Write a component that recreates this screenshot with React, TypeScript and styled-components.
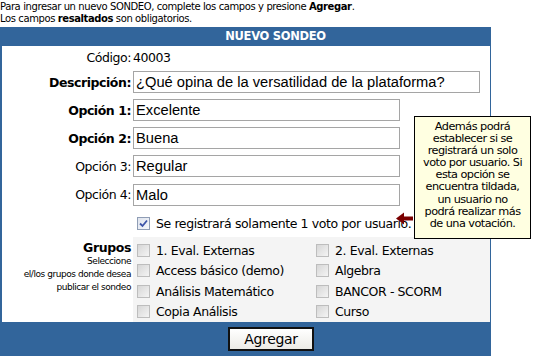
import styled, { createGlobalStyle } from 'styled-components';

const GlobalStyle = createGlobalStyle`
  body {
    margin: 0;
    background: #ffffff;
    font-family: Tahoma, "DejaVu Sans", "Liberation Sans", sans-serif;
    color: #000;
  }
`;

const BLUE = '#32659b';
const FONT = `"Liberation Sans", Arial, sans-serif`;
const UI_FONT = `"DejaVu Sans", Tahoma, sans-serif`;

const Page = styled.div`
  position: relative;
  width: 544px;
  height: 356px;
  overflow: hidden;
`;

const Intro = styled.div`
  font-family: ${UI_FONT};
  font-size: 10px;
  letter-spacing: -0.4px;
  line-height: 12px;
  padding-top: 1px;
  height: 26px;
`;

const Panel = styled.div`
  width: 491px;
  display: flex;
  flex-direction: column;
`;

const Header = styled.div`
  height: 19px;
  background: ${BLUE};
  color: #fff;
  font-family: ${UI_FONT};
  font-weight: bold;
  font-size: 11.5px;
  letter-spacing: -0.3px;
  line-height: 19px;
  padding-left: 60px;
  text-align: center;
`;

const Body = styled.div`
  border-left: 2px solid ${BLUE};
  border-right: 1px solid ${BLUE};
  display: flex;
  flex-direction: column;
`;

const Row = styled.div<{ $h: number }>`
  display: grid;
  grid-template-columns: 129px 1fr;
  column-gap: 2px;
  align-items: center;
  height: ${({ $h }) => $h}px;
`;

const Label = styled.div<{ $bold?: boolean }>`
  font-family: ${UI_FONT};
  font-size: 12.5px;
  letter-spacing: -0.45px;
  font-weight: ${({ $bold }) => ($bold ? 'bold' : 'normal')};
  text-align: right;
`;

const Value = styled.div`
  font-family: ${UI_FONT};
  font-size: 12.5px;
  letter-spacing: -0.45px;
`;

const Input = styled.div<{ $w: number }>`
  box-sizing: border-box;
  width: ${({ $w }) => $w}px;
  height: 22px;
  border: 1px solid #a5a5a5;
  background: #fff;
  font-family: ${FONT};
  font-size: 14.7px;
  line-height: 20px;
  padding-left: 2px;
  white-space: nowrap;
  overflow: hidden;
`;

const CheckLine = styled.label`
  display: flex;
  align-items: center;
  gap: 6px;
  font-family: ${UI_FONT};
  font-size: 12.5px;
  letter-spacing: -0.4px;
  padding-left: 4px;
`;

const Box = styled.span<{ $checked?: boolean }>`
  box-sizing: border-box;
  width: 13px;
  height: 13px;
  flex: none;
  border: 1px solid ${({ $checked }) => ($checked ? '#8f9db5' : '#bdbdbd')};
  background: ${({ $checked }) =>
    $checked ? 'linear-gradient(135deg, #dfe4ee, #f4f6fa)' : 'linear-gradient(135deg, #d6d6d6, #f4f4f4)'};
  display: flex;
  align-items: center;
  justify-content: center;
`;

const GroupsRow = styled.div`
  display: grid;
  grid-template-columns: 129px 1fr;
  column-gap: 2px;
  height: 85px;
`;

const GroupsLabel = styled.div`
  text-align: right;
  padding-top: 4px;
`;

const GroupsTitle = styled.div`
  font-family: ${UI_FONT};
  font-weight: bold;
  font-size: 12.5px;
  letter-spacing: -0.4px;
  line-height: 14px;
`;

const GroupsHint = styled.div`
  font-family: ${UI_FONT};
  font-size: 9px;
  letter-spacing: -0.45px;
  line-height: 13px;
`;

const GroupsGrid = styled.div`
  background: #f4f4f4;
  display: grid;
  grid-template-columns: 179px 1fr;
  grid-auto-rows: 20.5px;
  padding-top: 3px;
`;

const Footer = styled.div`
  height: 34px;
  background: ${BLUE};
  display: flex;
  align-items: center;
  padding-left: 228px;
`;

const Button = styled.button`
  box-sizing: border-box;
  width: 86px;
  height: 24px;
  border: 2px solid #111;
  background: linear-gradient(#ffffff, #ecebe6);
  font-family: ${UI_FONT};
  font-size: 14px;
  letter-spacing: -0.3px;
  padding: 0;
  margin-top: -1px;
`;

const Tooltip = styled.div`
  position: absolute;
  left: 414px;
  top: 116px;
  box-sizing: border-box;
  width: 117px;
  height: 123px;
  border: 1px solid #000;
  background: #ffffe1;
  font-family: ${UI_FONT};
  font-size: 11.3px;
  letter-spacing: -0.55px;
  line-height: 12.1px;
  text-align: center;
  padding-top: 4px;
`;

const TipLine = styled.div`
  white-space: nowrap;
`;

const Arrow = styled.svg`
  position: absolute;
  left: 396px;
  top: 212px;
`;

const Check = () => (
  <svg width="9" height="9" viewBox="0 0 9 9">
    <path d="M1 4.5 L3.5 7 L8 1.5" fill="none" stroke="#3d54a8" strokeWidth="1.8" />
  </svg>
);

const groups = [
  '1. Eval. Externas',
  '2. Eval. Externas',
  'Access básico (demo)',
  'Algebra',
  'Análisis Matemático',
  'BANCOR - SCORM',
  'Copia Análisis',
  'Curso',
];

const tip = [
  'Además podrá',
  'establecer si se',
  'registrará un solo',
  'voto por usuario. Si',
  'esta opción se',
  'encuentra tildada,',
  'un usuario no',
  'podrá realizar más',
  'de una votación.',
];

const App = () => (
  <Page>
    <GlobalStyle />
    <Intro>
      Para ingresar un nuevo SONDEO, complete los campos y presione <b>Agregar</b>.
      <br />
      Los campos <b>resaltados</b> son obligatorios.
    </Intro>
    <Panel>
      <Header>NUEVO SONDEO</Header>
      <Body>
        <Row $h={22}>
          <Label>Código:</Label>
          <Value>40003</Value>
        </Row>
        <Row $h={28}>
          <Label $bold>Descripción:</Label>
          <Input $w={347}>¿Qué opina de la versatilidad de la plataforma?</Input>
        </Row>
        <Row $h={28}>
          <Label $bold>Opción 1:</Label>
          <Input $w={267}>Excelente</Input>
        </Row>
        <Row $h={28}>
          <Label $bold>Opción 2:</Label>
          <Input $w={267}>Buena</Input>
        </Row>
        <Row $h={28}>
          <Label>Opción 3:</Label>
          <Input $w={267}>Regular</Input>
        </Row>
        <Row $h={29}>
          <Label>Opción 4:</Label>
          <Input $w={267}>Malo</Input>
        </Row>
        <Row $h={28}>
          <span />
          <CheckLine>
            <Box $checked>
              <Check />
            </Box>
            Se registrará solamente 1 voto por usuario.
          </CheckLine>
        </Row>
        <GroupsRow>
          <GroupsLabel>
            <GroupsTitle>Grupos</GroupsTitle>
            <GroupsHint>
              Seleccione
              <br />
              el/los grupos donde desea
              <br />
              publicar el sondeo
            </GroupsHint>
          </GroupsLabel>
          <GroupsGrid>
            {groups.map((g) => (
              <CheckLine key={g}>
                <Box />
                {g}
              </CheckLine>
            ))}
          </GroupsGrid>
        </GroupsRow>
      </Body>
      <Footer>
        <Button>Agregar</Button>
      </Footer>
    </Panel>
    <Arrow width="17" height="13" viewBox="0 0 17 13">
      <path d="M0 6.5 L8 0.5 L8 4.5 L17 4.5 L17 8.5 L8 8.5 L8 12.5 Z" fill="#7a0000" />
    </Arrow>
    <Tooltip>
      {tip.map((l) => (
        <TipLine key={l}>{l}</TipLine>
      ))}
    </Tooltip>
  </Page>
);

export default App;
